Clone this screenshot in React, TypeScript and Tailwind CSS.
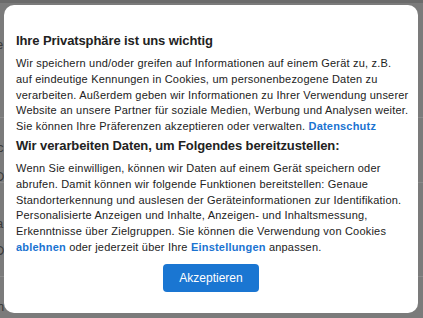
import React from 'react';

const font = { fontFamily: '"Liberation Sans", Arial, sans-serif' };

// faint bits of the page underneath the overlay
const BackdropHints = () => (
  <div className="absolute inset-0 text-[13px] text-[#3a3a3a]" style={font}>
    <div className="h-[3px] bg-[#6b6b6b]" />
    <div className="absolute left-0 right-0 top-[117px] h-px bg-[#8a8a8a]" />
    <div className="absolute left-0 right-0 top-[182px] h-px bg-[#8a8a8a]" />
    <div className="absolute left-0 right-0 top-[276px] h-px bg-[#8a8a8a]" />
    <span className="absolute left-[-4px] top-[35px]">e</span>
    <span className="absolute left-[-3px] top-[138px]">c</span>
    <span className="absolute left-[-5px] top-[167px]">D</span>
    <span className="absolute left-[-4px] top-[214px]">a</span>
    <span className="absolute left-[-5px] top-[241px]">D</span>
    <span className="absolute left-[-3px] top-[297px]">h</span>
  </div>
);

const Link = ({ children }: { children: React.ReactNode }) => (
  <a className="font-bold text-[#1a73d1]">{children}</a>
);

export default function App() {
  return (
    <div className="relative w-[423px] h-[318px] overflow-hidden bg-[#7b7b7b]">
      <BackdropHints />
      <div className="relative pt-[5px] pl-[4px]">
        <div
          className="w-[414px] h-[308px] bg-white rounded-[10px] px-[12px] pt-[26px] text-[#222]"
          style={font}
        >
          <h2 className="text-[13px] font-bold leading-[20px] tracking-[-0.1px]">Ihre Privatsphäre ist uns wichtig</h2>
          <p className="mt-[5px] text-[11px] leading-[15.8px] tracking-[0.2px] whitespace-nowrap">
            Wir speichern und/oder greifen auf Informationen auf einem Gerät zu, z.B.
            <br />
            auf eindeutige Kennungen in Cookies, um personenbezogene Daten zu
            <br />
            verarbeiten. Außerdem geben wir Informationen zu Ihrer Verwendung unserer
            <br />
            Website an unsere Partner für soziale Medien, Werbung und Analysen weiter.
            <br />
            Sie können Ihre Präferenzen akzeptieren oder verwalten. <Link>Datenschutz</Link>
          </p>
          <h3 className="mt-[2px] text-[13px] font-bold leading-[18px] tracking-[-0.1px]">
            Wir verarbeiten Daten, um Folgendes bereitzustellen:
          </h3>
          <p className="mt-[6px] text-[11px] leading-[15.8px] tracking-[0.2px] whitespace-nowrap">
            Wenn Sie einwilligen, können wir Daten auf einem Gerät speichern oder
            <br />
            abrufen. Damit können wir folgende Funktionen bereitstellen: Genaue
            <br />
            Standorterkennung und auslesen der Geräteinformationen zur Identifikation.
            <br />
            Personalisierte Anzeigen und Inhalte, Anzeigen- und Inhaltsmessung,
            <br />
            Erkenntnisse über Zielgruppen. Sie können die Verwendung von Cookies
            <br />
            <Link>ablehnen</Link> oder jederzeit über Ihre <Link>Einstellungen</Link> anpassen.
          </p>
          <div className="mt-[8px] flex justify-center">
            <button className="w-[96px] h-[28px] rounded-[4px] bg-[#1a76d2] text-white text-[12px]">
              Akzeptieren
            </button>
          </div>
        </div>
      </div>
    </div>
  );
}
